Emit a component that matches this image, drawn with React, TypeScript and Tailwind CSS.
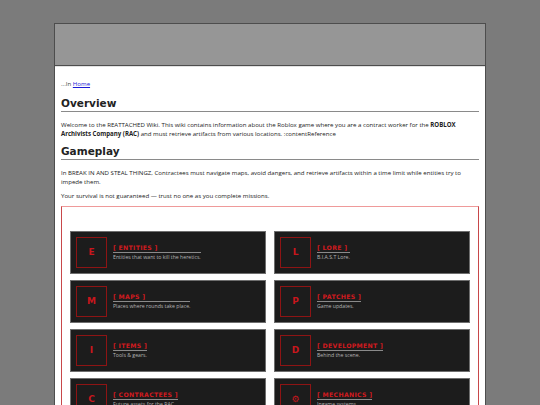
const CARDS = [
  { letter: 'E', title: '[ ENTITIES ]', desc: 'Entities that want to kill the heretics.' },
  { letter: 'L', title: '[ LORE ]', desc: 'B.I.A.S.T Lore.' },
  { letter: 'M', title: '[ MAPS ]', desc: 'Places where rounds take place.' },
  { letter: 'P', title: '[ PATCHES ]', desc: 'Game updates.' },
  { letter: 'I', title: '[ ITEMS ]', desc: 'Tools & gears.' },
  { letter: 'D', title: '[ DEVELOPMENT ]', desc: 'Behind the scene.' },
  { letter: 'C', title: '[ CONTRACTEES ]', desc: 'Future assets for the RAC.' },
  { letter: '⚙', title: '[ MECHANICS ]', desc: 'Ingame systems.' },
];

function Card({ letter, title, desc }: { letter: string; title: string; desc: string }) {
  return (
    <div className="flex h-[43px] items-center gap-[6px] border border-[#6e6e6e] bg-[#1c1c1c] px-[5px]">
      {/* Letter box */}
      <div className="flex h-[31px] w-[31px] shrink-0 items-center justify-center border border-[#8e1414]">
        <span className="text-[9px] font-bold text-[#c8161c] [font-family:'DejaVu_Sans',sans-serif]">
          {letter}
        </span>
      </div>
      {/* Title + description */}
      <div className="inline-flex flex-col items-stretch">
        <span className="border-b border-[#8a8a8a] pb-[1px] text-[6.2px] leading-[7px] font-bold tracking-[0.3px] text-[#d01a1f] [font-family:'DejaVu_Sans',sans-serif]">
          {title}
        </span>
        <span className="mt-[1px] text-[5.2px] leading-[7px] text-[#b4b4b4]">{desc}</span>
      </div>
    </div>
  );
}

export default function App() {
  return (
    <div className="min-h-[405px] overflow-hidden bg-[#7b7b7b] pt-[23px] [font-family:'Open_Sans',sans-serif]">
      <div className="ml-[54px] w-[432px] border border-[#4d4d4d] bg-white">
        {/* Header band */}
        <div className="h-[42px] border-b border-[#4d4d4d] bg-[#969696]" />
        <div className="h-[1px] bg-[#e2e2e2]" />

        <div className="px-[6px] pt-[12px] pb-[40px] text-[#222]">
          <p className="text-[6.1px] leading-[9px] text-[#444]">
            ...In <a className="text-[#1a1ad6] underline">Home</a>
          </p>

          <h2 className="mt-[8px] border-b border-[#8a8a8a] pb-[1px] text-[10.5px] leading-[14px] font-bold text-[#222] [font-family:'DejaVu_Sans',sans-serif]">
            Overview
          </h2>
          <p className="mt-[8px] text-[6.1px] leading-[9px]">
            Welcome to the REATTACHED Wiki. This wiki contains information about the Roblox game where you are a contract worker for the{' '}
            <b>ROBLOX Archivists Company (RAC)</b> and must retrieve artifacts from various locations. :contentReference
          </p>

          <h2 className="mt-[6px] border-b border-[#8a8a8a] pb-[1px] text-[10.5px] leading-[14px] font-bold text-[#222] [font-family:'DejaVu_Sans',sans-serif]">
            Gameplay
          </h2>
          <p className="mt-[8px] text-[6.1px] leading-[9px]">
            In BREAK IN AND STEAL THINGZ, Contractees must navigate maps, avoid dangers, and retrieve artifacts within a time limit while entities try to impede them.
          </p>
          <p className="mt-[5px] text-[6.1px] leading-[9px]">
            Your survival is not guaranteed — trust no one as you complete missions.
          </p>

          {/* Card panel */}
          <div className="mt-[6px] border border-[#c8474a] border-t-[#ef9a9a] px-[8px] pt-[24px] pb-[10px]">
            <div className="grid grid-cols-2 gap-x-[8px] gap-y-[6px]">
              {CARDS.map((c) => (
                <Card key={c.title} {...c} />
              ))}
            </div>
          </div>
        </div>
      </div>
    </div>
  );
}
